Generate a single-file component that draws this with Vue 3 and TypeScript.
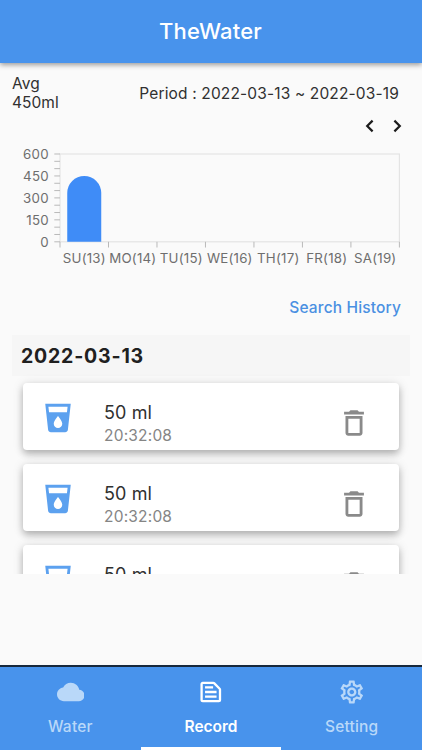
<script setup lang="ts">
interface Entry {
  id: number
  amount: string
  time: string
}

const days: string[] = ['SU(13)', 'MO(14)', 'TU(15)', 'WE(16)', 'TH(17)', 'FR(18)', 'SA(19)']
const values: number[] = [450, 0, 0, 0, 0, 0, 0]
const axisLabels: number[] = [600, 450, 300, 150, 0]
const maxValue = 600

const left = 60
const right = 399.4
const top = 14
const bottom = 101.8
const step = (right - left) / days.length
const barWidth = 34

const yOf = (v: number): number => bottom - (v / maxValue) * (bottom - top)
const minorTicks: number[] = Array.from({ length: 13 }, (_, i) => i * 50)

const barPath = (v: number, i: number): string => {
  const x = left + step * (i + 0.5) - barWidth / 2
  const r = barWidth / 2
  return `M${x} ${bottom}V${yOf(v) + r}a${r} ${r} 0 0 1 ${barWidth} 0V${bottom}z`
}

const entries: Entry[] = [
  { id: 1, amount: '50 ml', time: '20:32:08' },
  { id: 2, amount: '50 ml', time: '20:32:08' },
  { id: 3, amount: '50 ml', time: '20:32:08' },
]
</script>

<template>
  <div class="screen">
    <header class="bar"><h1>TheWater</h1></header>

    <section class="summary">
      <div class="avg">Avg<br />450ml</div>
      <div class="period">Period : 2022-03-13 ~ 2022-03-19</div>
    </section>

    <div class="pager">
      <svg viewBox="0 0 10 14"><path d="M7.6 1.6L2.2 7l5.4 5.4" /></svg>
      <svg viewBox="0 0 10 14"><path d="M2.4 1.6L7.8 7l-5.4 5.4" /></svg>
    </div>

    <svg class="chart" width="422" height="135" viewBox="0 0 422 135">
      <rect class="frame" :x="left" :y="top" :width="right - left" :height="bottom - top" />
      <line v-for="t in minorTicks" :key="t" class="tick" :x1="54.3" :x2="left" :y1="yOf(t)" :y2="yOf(t)" />
      <line
        v-for="n in days.length + 1"
        :key="'x' + n"
        class="tick"
        :x1="left + step * (n - 1)"
        :x2="left + step * (n - 1)"
        :y1="bottom"
        :y2="bottom + 5.7"
      />
      <text v-for="a in axisLabels" :key="'a' + a" class="ylabel" x="49" :y="yOf(a) + 5">{{ a }}</text>
      <template v-for="(v, i) in values" :key="'b' + i">
        <path v-if="v > 0" class="column" :d="barPath(v, i)" />
      </template>
      <text v-for="(d, i) in days" :key="d" class="xlabel" :x="left + step * (i + 0.5) + 0.1" y="123.3">{{ d }}</text>
    </svg>

    <div class="search"><a>Search History</a></div>

    <main class="list">
      <h2>2022-03-13</h2>
      <article v-for="e in entries" :key="e.id" class="card">
        <svg class="glass" viewBox="0 0 24 24">
          <path
            d="M3 2l2.01 18.23C5.13 21.23 5.97 22 7 22h10c1.03 0 1.87-.77 1.99-1.77L21 2H3zm9 17c-1.66 0-3-1.34-3-3 0-2 3-5.4 3-5.4s3 3.4 3 5.4c0 1.66-1.34 3-3 3zm6.33-11H5.67l-.44-4h13.55l-.45 4z"
          />
        </svg>
        <div class="info">
          <div class="amount">{{ e.amount }}</div>
          <div class="time">{{ e.time }}</div>
        </div>
        <svg class="trash" viewBox="0 0 24 24">
          <path
            d="M6 19c0 1.1.9 2 2 2h8c1.1 0 2-.9 2-2V7H6v12zM8 9h8v10H8V9zm7.5-5l-1-1h-5l-1 1H5v2h14V4h-3.5z"
          />
        </svg>
      </article>
    </main>

    <nav class="tabs">
      <div class="tab">
        <svg viewBox="0 0 24 24">
          <path
            d="M19.35 10.04C18.67 6.59 15.64 4 12 4 9.11 4 6.6 5.64 5.35 8.04 2.34 8.36 0 10.91 0 14c0 3.31 2.69 6 6 6h13c2.76 0 5-2.24 5-5 0-2.64-2.05-4.78-4.65-4.96z"
          />
        </svg>
        <span>Water</span>
      </div>
      <div class="tab active">
        <svg viewBox="0 0 24 24">
          <path
            d="M14.17 5L19 9.83V19H5V5h9.17m0-2H5c-1.1 0-2 .9-2 2v14c0 1.1.9 2 2 2h14c1.1 0 2-.9 2-2V9.83c0-.53-.21-1.04-.59-1.41l-4.83-4.83c-.37-.38-.88-.59-1.41-.59zM7 15h10v2H7v-2zm0-4h10v2H7v-2zm0-4h7v2H7V7z"
          />
        </svg>
        <span>Record</span>
      </div>
      <div class="tab">
        <svg viewBox="0 0 24 24">
          <path
            d="M19.43 12.98c.04-.32.07-.64.07-.98 0-.34-.03-.66-.07-.98l2.11-1.65c.19-.15.24-.42.12-.64l-2-3.46c-.09-.16-.26-.25-.44-.25-.06 0-.12.01-.17.03l-2.49 1c-.52-.4-1.08-.73-1.69-.98l-.38-2.65C14.46 2.18 14.25 2 14 2h-4c-.25 0-.46.18-.49.42l-.38 2.65c-.61.25-1.17.59-1.69.98l-2.49-1c-.06-.02-.12-.03-.18-.03-.17 0-.34.09-.43.25l-2 3.46c-.13.22-.07.49.12.64l2.11 1.65c-.04.32-.07.65-.07.98 0 .33.03.66.07.98l-2.11 1.65c-.19.15-.24.42-.12.64l2 3.46c.09.16.26.25.44.25.06 0 .12-.01.17-.03l2.49-1c.52.4 1.08.73 1.69.98l.38 2.65c.03.24.24.42.49.42h4c.25 0 .46-.18.49-.42l.38-2.65c.61-.25 1.17-.59 1.69-.98l2.49 1c.06.02.12.03.18.03.17 0 .34-.09.43-.25l2-3.46c.12-.22.07-.49-.12-.64l-2.11-1.65zm-1.98-1.71c.04.31.05.52.05.73 0 .21-.02.43-.05.73l-.14 1.13.89.7 1.08.84-.7 1.21-1.27-.51-1.04-.42-.9.68c-.43.32-.84.56-1.25.73l-1.06.43-.16 1.13-.2 1.35h-1.4l-.19-1.35-.16-1.13-1.06-.43c-.43-.18-.83-.41-1.23-.71l-.91-.7-1.06.43-1.27.51-.7-1.21 1.08-.84.89-.7-.14-1.13c-.03-.31-.05-.54-.05-.74s.02-.43.05-.73l.14-1.13-.89-.7-1.08-.84.7-1.21 1.27.51 1.04.42.9-.68c.43-.32.84-.56 1.25-.73l1.06-.43.16-1.13.2-1.35h1.39l.19 1.35.16 1.13 1.06.43c.43.18.83.41 1.23.71l.91.7 1.06-.43 1.27-.51.7 1.21-1.07.85-.89.7.14 1.13zM12 8c-2.21 0-4 1.79-4 4s1.79 4 4 4 4-1.79 4-4-1.79-4-4-4zm0 6c-1.1 0-2-.9-2-2s.9-2 2-2 2 .9 2 2-.9 2-2 2z"
          />
        </svg>
        <span>Setting</span>
      </div>
    </nav>
  </div>
</template>

<style>
body {
  background: #fafafa;
}
</style>

<style scoped>
.screen {
  width: 422px;
  height: 750px;
  display: flex;
  flex-direction: column;
  overflow: hidden;
  background: #fafafa;
  font-family: Inter, 'Liberation Sans', sans-serif;
  color: #303030;
}
.bar {
  flex: none;
  height: 63px;
  background: #4893ec;
  box-shadow: 0 2px 5px rgba(0, 0, 0, 0.38);
  text-align: center;
}
h1 {
  margin: 0;
  padding-right: 1px;
  font-size: 22px;
  font-weight: 500;
  line-height: 63px;
  letter-spacing: 0.2px;
  color: #fff;
}
.summary {
  flex: none;
  height: 51px;
  padding: 0 23px 0 12px;
  display: flex;
  justify-content: space-between;
  font-size: 15.5px;
  line-height: 19px;
}
.avg {
  padding-top: 11.4px;
  letter-spacing: 0.05px;
}
.period {
  padding-top: 21px;
  letter-spacing: 0.15px;
}
.pager {
  flex: none;
  height: 26px;
  padding: 5px 20px 0 0;
  box-sizing: border-box;
  display: flex;
  justify-content: flex-end;
  gap: 17px;
}
.pager svg {
  width: 10px;
  height: 14px;
  fill: none;
  stroke: #1c1c1c;
  stroke-width: 2.2;
}
.chart {
  flex: none;
  display: block;
}
.frame {
  fill: none;
  stroke: #e4e4e4;
  stroke-width: 1.2;
}
.tick {
  stroke: #b9b9b9;
  stroke-width: 1;
}
.column {
  fill: #3f8cf7;
}
.ylabel,
.xlabel {
  font-size: 13.3px;
  fill: #6e6e6e;
}
.ylabel {
  text-anchor: end;
  letter-spacing: 0.3px;
}
.xlabel {
  text-anchor: middle;
  letter-spacing: 0.22px;
}
.search {
  flex: none;
  height: 60px;
  padding: 23px 21px 0 0;
  box-sizing: border-box;
  text-align: right;
  font-size: 15.5px;
  font-weight: 500;
  line-height: 19px;
  letter-spacing: 0.15px;
  color: #4a90e2;
}
.list {
  flex: none;
  height: 239.4px;
  padding: 0 12px;
  overflow: hidden;
}
h2 {
  margin: 0 0 6.8px;
  padding-left: 9px;
  height: 41px;
  font-size: 19.5px;
  font-weight: 700;
  line-height: 42px;
  letter-spacing: 0.8px;
  color: #202020;
  background: #f6f6f6;
}
.card {
  height: 67.4px;
  margin: 0 11px 13.6px;
  display: flex;
  background: #fff;
  border-radius: 4px;
  box-shadow: 0 4px 7px rgba(0, 0, 0, 0.24), 0 1px 12px rgba(0, 0, 0, 0.12);
}
.glass {
  flex: none;
  width: 34px;
  height: 34px;
  margin: 17.8px 0 0 18px;
  fill: #5ca1ef;
}
.info {
  flex: 1;
  padding: 18.2px 0 0 29px;
}
.amount {
  font-size: 18px;
  line-height: 24px;
  letter-spacing: 0.1px;
}
.time {
  padding-top: 1px;
  font-size: 15.5px;
  line-height: 20px;
  letter-spacing: 0.2px;
  color: #858585;
}
.trash {
  flex: none;
  width: 34px;
  height: 34px;
  margin: 23.2px 28px 0 0;
  fill: #8a8a8a;
}
.tabs {
  flex: none;
  height: 85px;
  margin-top: auto;
  box-sizing: border-box;
  display: grid;
  grid-template-columns: repeat(3, 1fr);
  background: #4893ec;
  border-top: 2px solid #17283c;
}
.tab {
  display: flex;
  flex-direction: column;
  align-items: center;
  padding-top: 11px;
  border-bottom: 3px solid transparent;
  color: #b9d8f9;
  font-size: 15.5px;
  font-weight: 500;
  line-height: 20px;
  letter-spacing: 0.2px;
}
.tab svg {
  width: 27.6px;
  height: 28px;
  margin-bottom: 11px;
  fill: currentColor;
}
.tab.active {
  color: #fff;
  font-weight: 600;
  letter-spacing: 0;
  border-bottom-color: #fff;
}
</style>
